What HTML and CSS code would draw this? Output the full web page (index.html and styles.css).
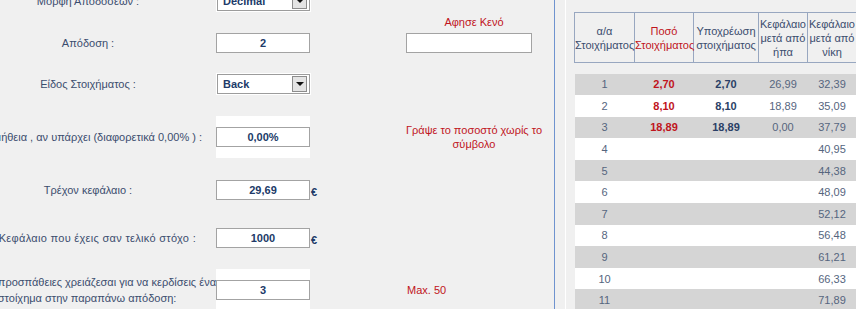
FILE: index.html
```html
<!DOCTYPE html>
<html lang="el">
<head>
    <meta charset="UTF-8">
    <title>Στοιχηματικό πλάνο</title>
    <link rel="stylesheet" href="styles.css">
</head>
<body>
    <div class="page">
        <div class="form">
            <!-- μορφή αποδόσεων -->
            <div class="label row-top">Μορφή Αποδόσεων :</div>
            <div class="field row-top">
                <div class="select"><span>Decimal</span><i class="arrow"></i></div>
            </div>

            <!-- απόδοση -->
            <div class="label row-end">Απόδοση :</div>
            <div class="field row-end"><div class="input">2</div></div>
            <div class="note note-stack">
                <span>Αφησε Κενό</span>
                <div class="input input-wide"></div>
            </div>

            <!-- είδος -->
            <div class="label">Είδος Στοιχήματος :</div>
            <div class="field">
                <div class="select"><span>Back</span><i class="arrow"></i></div>
            </div>

            <!-- προμήθεια -->
            <div class="label label-end label-fee">Προμήθεια , αν υπάρχει (διαφορετικά 0,00% ) :</div>
            <div class="field field-white"><div class="input">0,00%</div></div>
            <div class="note">Γράψε το ποσοστό χωρίς το<br>σύμβολο</div>

            <!-- κεφάλαιο -->
            <div class="label">Τρέχον κεφάλαιο :</div>
            <div class="field"><div class="input">29,69</div></div>
            <div class="unit">€</div>

            <!-- στόχος -->
            <div class="label label-end label-goal">Κεφάλαιο που έχεις σαν τελικό στόχο :</div>
            <div class="field"><div class="input">1000</div></div>
            <div class="unit">€</div>

            <!-- προσπάθειες -->
            <div class="label label-left">προσπάθειες χρειάζεσαι για να κερδίσεις ένα<br>στοίχημα στην παραπάνω απόδοση:</div>
            <div class="field field-white"><div class="input">3</div></div>
            <div class="note note-left">Max. 50</div>
        </div>

        <div class="divider"></div>

        <div class="results">
            <div class="results-inner">
                <table class="bets">
                    <colgroup>
                        <col class="c1">
                        <col class="c2">
                        <col class="c3">
                        <col class="c4">
                        <col class="c5">
                    </colgroup>
                    <thead>
                        <tr>
                            <th>α/α<br>Στοιχήματος</th>
                            <th class="red">Ποσό<br>Στοιχήματος</th>
                            <th>Υποχρέωση<br>στοιχήματος</th>
                            <th>Κεφάλαιο<br>μετά από<br>ήπα</th>
                            <th>Κεφάλαιο<br>μετά από<br>νίκη</th>
                        </tr>
                    </thead>
                    <tbody>
                        <tr class="spacer"><td colspan="5"></td></tr>
                        <tr class="grey"><td>1</td><td class="amount">2,70</td><td class="liab">2,70</td><td>26,99</td><td>32,39</td></tr>
                        <tr><td>2</td><td class="amount">8,10</td><td class="liab">8,10</td><td>18,89</td><td>35,09</td></tr>
                        <tr class="grey"><td>3</td><td class="amount">18,89</td><td class="liab">18,89</td><td>0,00</td><td>37,79</td></tr>
                        <tr><td>4</td><td></td><td></td><td></td><td>40,95</td></tr>
                        <tr class="grey"><td>5</td><td></td><td></td><td></td><td>44,38</td></tr>
                        <tr><td>6</td><td></td><td></td><td></td><td>48,09</td></tr>
                        <tr class="grey"><td>7</td><td></td><td></td><td></td><td>52,12</td></tr>
                        <tr><td>8</td><td></td><td></td><td></td><td>56,48</td></tr>
                        <tr class="grey"><td>9</td><td></td><td></td><td></td><td>61,21</td></tr>
                        <tr><td>10</td><td></td><td></td><td></td><td>66,33</td></tr>
                        <tr class="grey"><td>11</td><td></td><td></td><td></td><td>71,89</td></tr>
                    </tbody>
                </table>
            </div>
        </div>
    </div>
</body>
</html>
```

FILE: styles.css
```css
*{
    margin:0;
    padding:0;
    box-sizing:border-box;
}
body{
    background:#f0f0f0;
    font-family:"Liberation Sans", Arial, sans-serif;
    font-size:11px;
    color:#3b4d6e;
    overflow:hidden;
}
.page{
    display:flex;
    height:309px;
}

/* φόρμα αριστερά */
.form{
    flex:0 0 594px;
    margin-left:-40px;
    display:grid;
    grid-template-columns:256px 94px 96px 136px;
    grid-template-rows:13px 40px 61px 46px 60px 35px 70px;
}
.label{
    grid-column:1;
    align-self:center;
    text-align:center;
    line-height:20px;
    white-space:nowrap;
}
.label-end{
    text-align:right;
}
.label-fee{
    padding-right:14px;
}
.label-goal{
    padding-right:20px;
    letter-spacing:.3px;
}
.label-left{
    justify-self:end;
    text-align:left;
    line-height:16px;
}
.row-top{
    align-self:end;
    margin-bottom:2px;
}
.row-end{
    align-self:end;
}
.field{
    grid-column:2;
    align-self:center;
}
.field.row-top{
    align-self:end;
}
.field.row-end{
    align-self:end;
}
.field-white{
    background:#fff;
    height:42px;
    display:flex;
    align-items:center;
}
.input{
    width:94px;
    height:20px;
    background:#fff;
    border:1px solid #a3a3a3;
    text-align:center;
    line-height:18px;
    font-weight:bold;
    color:#203a68;
}
.input-wide{
    width:126px;
}
.select{
    display:flex;
    align-items:center;
    justify-content:space-between;
    width:93px;
    height:20px;
    margin-left:1px;
    background:#fff;
    border:1px solid #9c9c9c;
    box-shadow:0 0 0 1px #fff;
    padding:0 2px 0 5px;
    font-weight:bold;
    color:#203a68;
}
.arrow{
    display:flex;
    align-items:center;
    justify-content:center;
    width:15px;
    height:16px;
    background:#e4e4e4;
    border:1px solid #8c8c8c;
}
.arrow::after{
    content:"";
    border-left:4px solid transparent;
    border-right:4px solid transparent;
    border-top:4px solid #111;
}
.unit{
    grid-column:3;
    align-self:center;
    margin-top:4px;
    padding-left:1px;
    font-weight:bold;
    color:#203a68;
}
.note{
    grid-column:4;
    align-self:center;
    text-align:center;
    line-height:14px;
    white-space:nowrap;
    color:#c0141c;
}
.note-stack{
    align-self:stretch;
    display:flex;
    flex-direction:column;
    justify-content:space-between;
    align-items:flex-start;
    padding-top:2px;
}
.note-stack span{
    width:136px;
}
.note-left{
    text-align:left;
    padding-left:1px;
}

/* διαχωριστικό */
.divider{
    flex:0 0 1px;
    background:#6f93cf;
}

/* πίνακας δεξιά */
.results{
    flex:1;
    padding-left:10px;
}
.results-inner{
    height:100%;
    border-left:1px solid #fff;
    padding:12px 0 0 8px;
}
.bets{
    border-collapse:collapse;
    table-layout:fixed;
    width:282px;
}
.bets .c1{ width:60px; }
.bets .c2{ width:59px; }
.bets .c3{ width:65px; }
.bets .c4{ width:49px; }
.bets .c5{ width:49px; }
.bets th{
    height:50px;
    border:1px solid #98a7c0;
    font-weight:normal;
    line-height:14px;
    white-space:nowrap;
    color:#3b4d6e;
}
.bets th.red{
    color:#c0141c;
}
.bets .spacer td{
    height:11px;
    background:none;
}
.bets td{
    height:21.6px;
    text-align:center;
    color:#55657e;
    background:#fff;
}
.bets tr.grey td{
    background:#d5d5d5;
}
.bets td.amount{
    color:#c0141c;
    font-weight:bold;
}
.bets td.liab{
    color:#2a3f66;
    font-weight:bold;
}
```
